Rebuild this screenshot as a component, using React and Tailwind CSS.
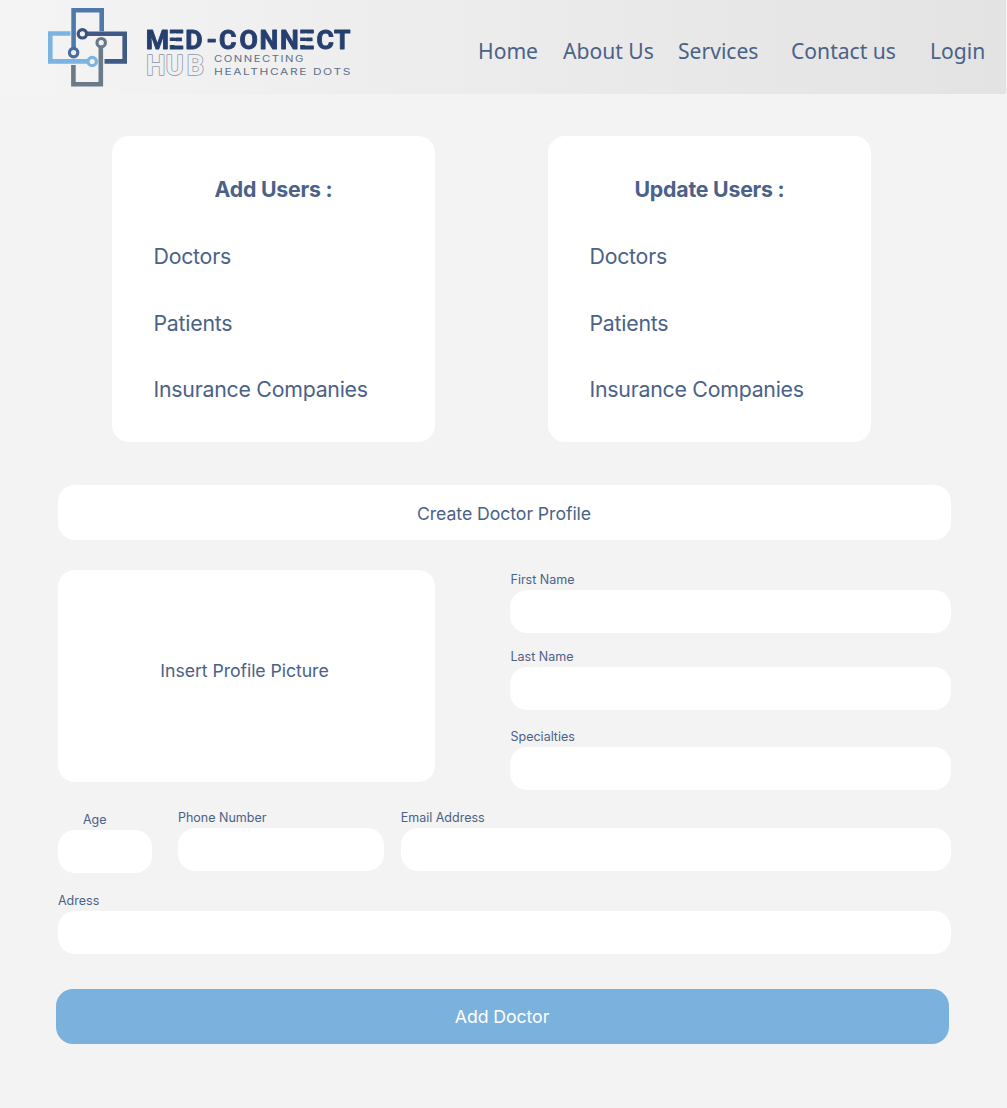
const ROBOTO = { fontFamily: 'Roboto, sans-serif' };

function Logo() {
  return (
    <svg className="block h-[94px] w-[360px] shrink-0" viewBox="0 0 360 94" role="img" aria-label="Med-Connect Hub">
      <g fill="none" strokeWidth="4.6">
        <path d="M73.6 48V10.3h28.1v21" stroke="#5079ab" />
        <path d="M70.5 33.5H50.3v27.9h37.5" stroke="#7bb4e0" />
        <path d="M86.5 33.8h38.2v27.6h-20.2" stroke="#405a86" />
        <path d="M73.4 65v19.3h27.4V47" stroke="#6b7a89" />
      </g>
      <g fill="#f1f1f1" strokeWidth="3.2">
        <circle cx="73.6" cy="52.6" r="4.2" stroke="#486d9f" />
        <circle cx="82.4" cy="33.8" r="4.2" stroke="#3b547d" />
        <circle cx="101.2" cy="42.7" r="4.2" stroke="#66788a" />
        <circle cx="92.2" cy="61.5" r="4.2" stroke="#7bb4e0" />
      </g>
      <mask id="bars" maskUnits="userSpaceOnUse" x="0" y="0" width="360" height="94">
        <rect width="360" height="94" fill="#fff" />
        <path d="M168 33.5h8v3.9h-8zM168 41.1h8v3.9h-8zM298.6 33.5h8v3.9h-8zM298.6 41.1h8v3.9h-8z" fill="#000" />
      </mask>
      <text
        x="145.8 168.6 185.2 206.5 219 239.6 259.6 279.9 299.1 316.4 334"
        y="48.8"
        fontSize="26.6"
        fontWeight="700"
        fill="#263f6e"
        stroke="#263f6e"
        strokeWidth="0.9"
        strokeLinejoin="round"
        mask="url(#bars)"
        style={ROBOTO}
      >
        MED-CONNECT
      </text>
      <text
        x="146.2 165.8 186.8"
        y="75.4"
        fontSize="27"
        fontWeight="700"
        fill="#f0f0f0"
        stroke="#8a95a8"
        strokeWidth="1.5"
        strokeLinejoin="round"
        paintOrder="stroke"
        style={ROBOTO}
      >
        HUB
      </text>
      <g fill="#60708c" fontSize="8.8" fontFamily="Inter, sans-serif">
        <text x="214" y="62" textLength="91" lengthAdjust="spacingAndGlyphs" letterSpacing="1.2">CONNECTING</text>
        <text x="214" y="75" textLength="138" lengthAdjust="spacingAndGlyphs" letterSpacing="1.2">HEALTHCARE DOTS</text>
      </g>
    </svg>
  );
}

function UserCard({ title }) {
  return (
    <section className="h-[306px] w-[323px] rounded-[17px] bg-white px-[41.5px] pt-9">
      <h2 className="text-center text-[21.3px] leading-[34px] font-bold tracking-[-0.22px]">{title}</h2>
      <ul className="mt-[33px] text-[21.3px] leading-[34px] tracking-[-0.24px]">
        <li>Doctors</li>
        <li className="mt-[32.5px]">Patients</li>
        <li className="mt-[32.5px]">Insurance Companies</li>
      </ul>
    </section>
  );
}

function Field({ label, className = '', labelClass = 'pl-[0.5px]' }) {
  return (
    <label className={`block ${className}`}>
      <span className={`block h-5 text-[12.5px] leading-5 ${labelClass}`}>{label}</span>
      <input className="block h-[43px] w-full rounded-[17px] bg-white px-4 text-sm outline-none" />
    </label>
  );
}

export default function App() {
  return (
    <div className="min-h-[1108px] w-[1007px] overflow-hidden bg-[#f3f3f3] font-['Inter',sans-serif] text-[#4a6287]">
      <header className="flex h-[94px] w-[1006px] bg-linear-to-r from-[#f4f4f4] to-[#e3e3e3]">
        <Logo />
        <nav className="flex pt-[35px] pl-[118px] font-['Noto_Sans',sans-serif] text-[21.1px] leading-8 whitespace-nowrap">
          <a className="w-[85px]">Home</a>
          <a className="w-[115px]">About Us</a>
          <a className="w-[113px]">Services</a>
          <a className="w-[139px]">Contact us</a>
          <a>Login</a>
        </nav>
      </header>

      <main>
        <div className="mt-[42.4px] ml-28 flex gap-[113px]">
          <UserCard title="Add Users :" />
          <UserCard title="Update Users :" />
        </div>

        <h1 className="mt-[43px] ml-[58px] flex h-[54.6px] w-[893px] items-center justify-center rounded-[17px] bg-white pt-[3px] pr-px text-[17.7px] tracking-[-0.07px]">
          Create Doctor Profile
        </h1>

        <div className="mt-[30px] ml-[58px] flex w-[893px] justify-between">
          <button className="h-[212px] w-[377px] rounded-[17px] bg-white pr-1 pb-[9px] text-[17.7px] tracking-[-0.07px]">
            Insert Profile Picture
          </button>
          <div className="w-[441px]">
            <Field label="First Name" />
            <Field label="Last Name" className="mt-[14px]" />
            <Field label="Specialties" className="mt-[17.5px]" />
          </div>
        </div>

        <div className="mt-[17.5px] ml-[58px] flex w-[893px]">
          <Field label="Age" className="mt-0.5 w-[94px]" labelClass="pl-[25px]" />
          <Field label="Phone Number" className="ml-[26px] w-[206px]" labelClass="" />
          <Field label="Email Address" className="ml-[16.7px] flex-1" labelClass="" />
        </div>
        <Field label="Adress" className="mt-[18px] ml-[58px] w-[893px]" labelClass="" />

        <button className="mt-[35.5px] ml-14 block h-[54.5px] w-[893px] rounded-[17px] bg-[#7bb1dd] pt-0.5 pr-px text-[17.7px] tracking-[-0.07px] text-white">
          Add Doctor
        </button>
      </main>
    </div>
  );
}
